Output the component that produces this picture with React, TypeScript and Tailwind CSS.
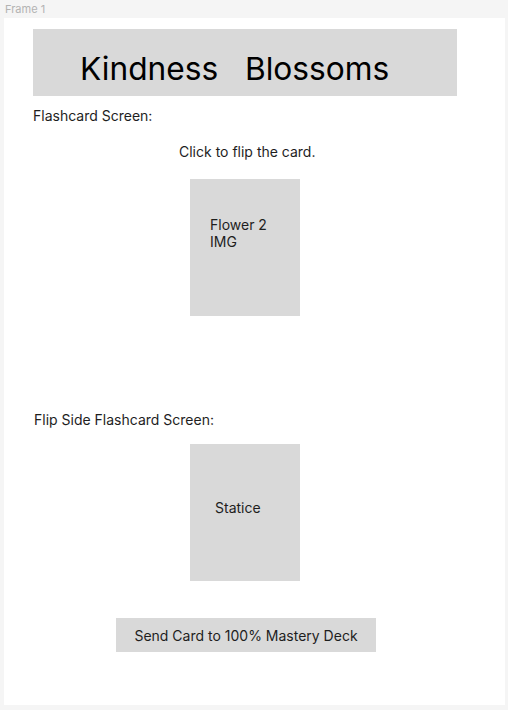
export default function App() {
  const font = { fontFamily: "Inter, 'Noto Sans', sans-serif" };
  return (
    <div className="w-[508px] h-[710px] bg-[#f5f5f5] overflow-hidden" style={font}>
      <div className="h-[18px] pl-[5px] text-[11px] leading-[18px] text-[#b3b3b3]">Frame 1</div>
      <div className="ml-[4px] w-[501px] h-[687px] bg-white flex flex-col text-[14px] leading-[17px] text-[#1e1e1e]">
        <div className="mt-[11px] ml-[29px] w-[424px] h-[67px] bg-[#d9d9d9] pl-[47px] pt-[20px]">
          <div className="text-[31.7px] leading-[39px] text-black whitespace-pre">Kindness   Blossoms</div>
        </div>
        <div className="mt-[11px] ml-[29px]">Flashcard Screen:</div>
        <div className="mt-[19px] ml-[175px]">Click to flip the card.</div>
        <div className="mt-[19px] ml-[186px] w-[110px] h-[137px] bg-[#d9d9d9] pt-[37px] pl-[20px]">
          <div>Flower 2</div>
          <div>IMG</div>
        </div>
        <div className="mt-[95px] ml-[30px]">Flip Side Flashcard Screen:</div>
        <div className="mt-[16px] ml-[186px] w-[110px] h-[137px] bg-[#d9d9d9] pt-[55px] pl-[25px]">
          <div>Statice</div>
        </div>
        <div className="mt-[37px] ml-[112px] w-[260px] h-[34px] bg-[#d9d9d9] flex items-center justify-center">
          Send Card to 100% Mastery Deck
        </div>
      </div>
    </div>
  );
}
